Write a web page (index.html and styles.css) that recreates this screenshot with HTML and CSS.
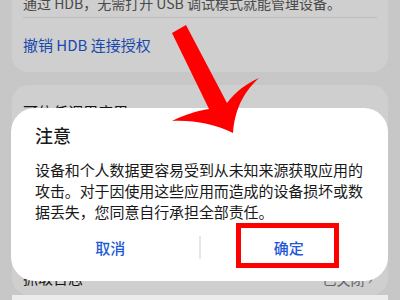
FILE: index.html
```html
<!DOCTYPE html>
<html lang="zh-CN">
<head>
  <meta charset="UTF-8" />
  <meta name="viewport" content="width=device-width, initial-scale=1.0"/>
  <title>开发人员选项</title>
  <link rel="stylesheet" href="styles.css">
</head>
<body>
  <div class="seite">
    <section class="karte karte-oben">
      <p class="hinweis">通过 HDB，无需打开 USB 调试模式就能管理设备。</p>
      <div class="zeile">
        <span class="link">撤销 HDB 连接授权</span>
      </div>
    </section>

    <section class="karte karte-liste">
      <div class="zeile zeile-erste">
        <span>可信任调用应用</span>
        <span class="pfeil">›</span>
      </div>
      <div class="platz"></div>
      <div class="zeile zeile-letzte">
        <span>抓取日志</span>
        <span class="wert">已关闭 <span class="pfeil">›</span></span>
      </div>
    </section>
  </div>

  <div class="maske"></div>
  <div class="leiste"></div>

  <div class="dialog">
    <h2 class="titel">注意</h2>
    <p class="text">设备和个人数据更容易受到从未知来源获取应用的<br>攻击。对于因使用这些应用而造成的设备损坏或数<br>据丢失，您同意自行承担全部责任。</p>
    <div class="knoepfe">
      <button class="knopf">取消</button>
      <span class="trenner"></span>
      <button class="knopf">确定</button>
    </div>
    <div class="rahmen"></div>
  </div>

  <!-- roter Pfeil zur Markierung -->
  <svg class="zeiger" width="400" height="300" viewBox="0 0 400 300">
    <path d="M172,33 L186,25 L227,103 C236,91 246,84 259,78 C246,90 235,106 233,133 C214,124 194,120 172,121 C186,114 197,111 209,109 Z" fill="#ff0000"/>
  </svg>
</body>
</html>
```

FILE: styles.css
```css
body {
  margin: 0;
  font-family: "Noto Sans CJK SC", "Noto Sans", sans-serif;
  background: #f5f5f5;
  overflow: hidden;
  color: #191919;
}

.seite {
  padding: 0 12px;
  display: flex;
  flex-direction: column;
  gap: 13px;
}

.karte {
  background: #ffffff;
  border-radius: 16px;
  padding: 0 11px;
}

.karte-oben {
  margin-top: -17px;
  padding-top: 10px;
  padding-bottom: 2px;
}

.hinweis {
  margin: 0 0 4px;
  font-size: 14px;
  line-height: 20px;
  color: #5a5a5a;
  white-space: nowrap;
}

.zeile {
  display: flex;
  align-items: center;
  justify-content: space-between;
  height: 52px;
  font-size: 15px;
}

.karte-oben .zeile {
  border-top: 1px solid #e8e8e8;
}

.link {
  color: #1f5ad6;
}

.karte-liste {
  height: 210px;
  display: flex;
  flex-direction: column;
}

.platz {
  flex: 1;
}

.zeile-letzte {
  height: 36px;
}

.pfeil {
  color: #999;
  font-size: 18px;
  margin-right: 4px;
}

.wert {
  color: #777;
  font-size: 14px;
}

.maske {
  position: fixed;
  inset: 0;
  background: rgba(0, 0, 0, 0.19);
}

.leiste {
  position: fixed;
  left: 12px;
  right: 12px;
  bottom: 0;
  height: 5px;
  background: #ececec;
}

.dialog {
  position: fixed;
  left: 11px;
  top: 108px;
  width: 377px;
  height: 173px;
  box-sizing: border-box;
  padding: 15px 24px 0;
  background: #ffffff;
  border-radius: 24px;
  z-index: 2;
}

.titel {
  margin: 0;
  font-size: 18px;
  line-height: 24px;
  font-weight: 500;
}

.text {
  margin: 12px 0 0;
  font-size: 15px;
  line-height: 21px;
  white-space: nowrap;
  letter-spacing: -0.1px;
}

.knoepfe {
  display: grid;
  grid-template-columns: 1fr auto 1fr;
  align-items: center;
  height: 40px;
  margin: 5px -13px 0;
}

.knopf {
  border: none;
  background: none;
  font-family: inherit;
  font-size: 15px;
  font-weight: 500;
  color: #1f5ad6;
  padding: 0;
}

.trenner {
  width: 2px;
  height: 23px;
  background: #e6e6e6;
}

/* rote Markierung um "确定" */
.rahmen {
  position: absolute;
  left: 225px;
  top: 115px;
  width: 103px;
  height: 45px;
  box-sizing: border-box;
  border: 5px solid #ff0000;
}

.zeiger {
  position: fixed;
  left: 0;
  top: 0;
  z-index: 3;
  pointer-events: none;
}
```
